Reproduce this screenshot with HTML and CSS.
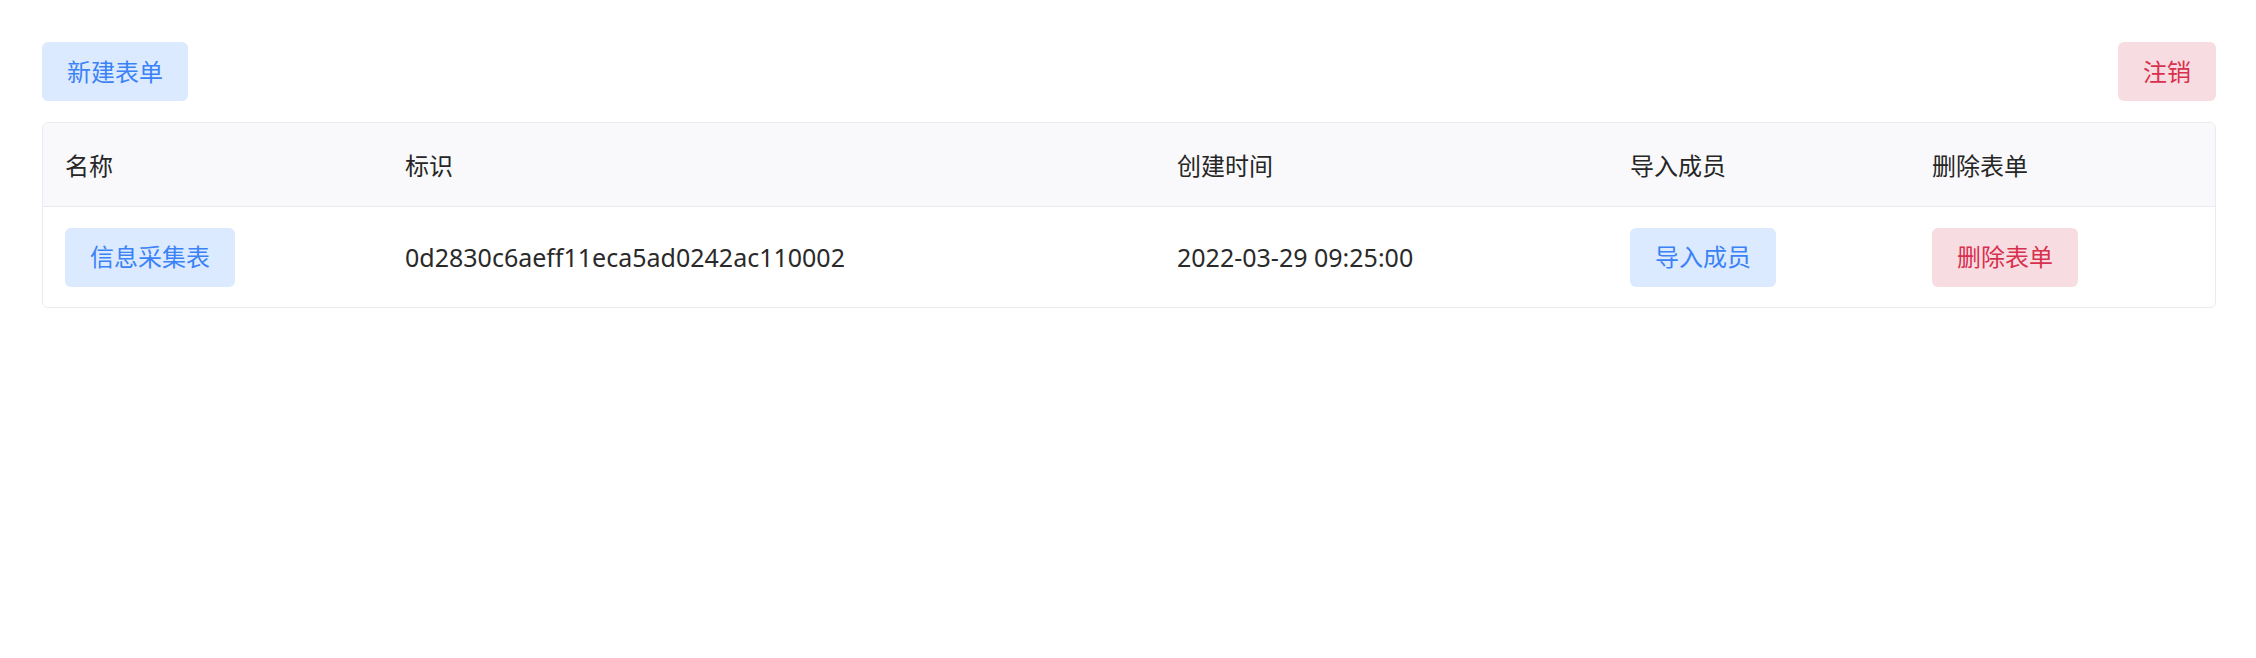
FILE: index.html
```html
<!DOCTYPE html>
<html lang="zh-CN">
<head>
<meta charset="utf-8">
<title>表单</title>
<link rel="stylesheet" href="styles.css">
</head>
<body>
<div class="page">
  <div class="toolbar">
    <button class="btn btn-blue">新建表单</button>
    <button class="btn btn-red">注销</button>
  </div>
  <div class="table">
    <div class="row head">
      <div class="cell">名称</div>
      <div class="cell">标识</div>
      <div class="cell">创建时间</div>
      <div class="cell">导入成员</div>
      <div class="cell">删除表单</div>
    </div>
    <div class="row body">
      <div class="cell"><button class="btn btn-blue">信息采集表</button></div>
      <div class="cell latin">0d2830c6aeff11eca5ad0242ac110002</div>
      <div class="cell latin">2022-03-29 09:25:00</div>
      <div class="cell"><button class="btn btn-blue">导入成员</button></div>
      <div class="cell"><button class="btn btn-red">删除表单</button></div>
    </div>
  </div>
</div>
</body>
</html>
```
FILE: styles.css
```css
html, body {
  margin: 0;
  padding: 0;
  background: #ffffff;
}
body {
  font-family: "Noto Sans", "Noto Sans CJK SC", sans-serif;
  font-size: 24px;
  color: #262626;
}
.page {
  padding: 42px 40px 0 42px;
}
.toolbar {
  display: flex;
  justify-content: space-between;
  align-items: center;
  margin-bottom: 21px;
}
.btn {
  font-family: inherit;
  font-size: 24px;
  line-height: 36px;
  height: 59px;
  padding: 0 25px;
  border: none;
  border-radius: 6px;
  cursor: pointer;
}
.btn-blue {
  background: #dbeafe;
  color: #3b82f6;
}
.btn-red {
  background: #f7dde1;
  color: #d9304f;
}
.table {
  border: 1px solid #ebebef;
  border-radius: 6px;
  overflow: hidden;
}
.row {
  display: grid;
  grid-template-columns: 340px 772px 453px 302px 1fr;
  align-items: center;
}
.head {
  height: 83px;
  background: #f9f9fb;
  border-bottom: 1px solid #ebebef;
}
.body {
  height: 100px;
}
.cell {
  padding: 0 22px;
  white-space: nowrap;
}
.latin {
  font-size: 25px;
  color: #2a2a2a;
}
```
